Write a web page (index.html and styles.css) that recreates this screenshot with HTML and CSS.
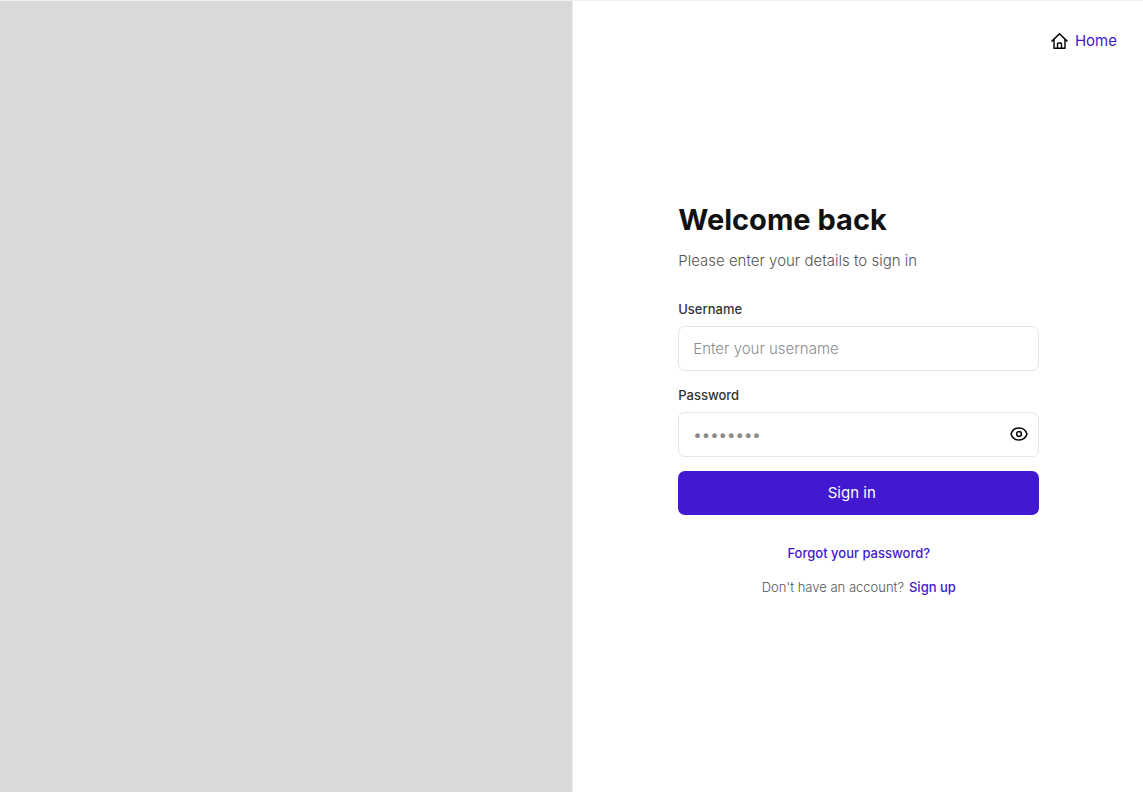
FILE: index.html
```
<!DOCTYPE html>
<html lang="en">
<head>
<meta charset="utf-8">
<meta name="viewport" content="width=device-width, initial-scale=1">
<title>Sign in</title>
<link rel="stylesheet" href="styles.css">
</head>
<body>
<div class="page">
  <div class="cover"></div>
  <div class="panel">
    <nav class="nav">
      <a class="home" href="#">
        <svg class="home-icon" viewBox="0 0 18 18" aria-hidden="true"><path d="M1 8.6 9 .9 17 8.6M3.2 6.8v9.4h11.6V6.8M6.9 16v-4.4q0-1 1-1h2.2q1 0 1 1V16"/></svg>
        <span>Home</span>
      </a>
    </nav>
    <main class="content">
      <h1 class="title">Welcome back</h1>
      <p class="subtitle">Please enter your details to sign in</p>
      <form class="form">
        <div class="field">
          <label class="label" for="username">Username</label>
          <div class="box"><input class="input" id="username" type="text" placeholder="Enter your username"></div>
        </div>
        <div class="field">
          <label class="label" for="password">Password</label>
          <div class="box">
            <input class="input input-password" id="password" type="password" placeholder="••••••••">
            <button class="reveal" type="button" aria-label="Show password">
              <svg class="eye-icon" viewBox="0 0 18 18" aria-hidden="true"><path d="M1 9C2.3 5.2 5.2 3 9 3S15.7 5.2 17 9C15.7 12.8 12.8 15 9 15S2.3 12.8 1 9Z"/><circle cx="9" cy="9" r="2.4"/></svg>
            </button>
          </div>
        </div>
        <button class="submit" type="submit">Sign in</button>
      </form>
      <div class="links">
        <a class="link" href="#">Forgot your password?</a>
        <p class="signup"><span>Don't have an account?</span><a class="link" href="#">Sign up</a></p>
      </div>
    </main>
  </div>
</div>
</body>
</html>
```
FILE: styles.css
```
* {
  box-sizing: border-box;
}

body {
  margin: 0;
  font-family: Inter, "Liberation Sans", sans-serif;
  color: #111;
  background: #fff;
}

.page {
  display: grid;
  grid-template-columns: 1fr 1fr;
  min-height: 100vh;
  border-top: 1px solid #f0f0f0;
}

.cover {
  background: #d9d9d9;
}

.panel {
  display: grid;
  grid-template-rows: 1fr auto 1fr;
  padding-left: 2px;
  border-left: 1px solid #f0f0f0;
}

.nav {
  display: flex;
  justify-content: flex-end;
  align-items: flex-start;
  padding: 30px 26px;
}

.home {
  display: flex;
  align-items: center;
  gap: 7px;
  font-size: 15px;
  line-height: 20px;
  font-weight: 400;
  color: #4318d1;
  text-decoration: none;
}

.home-icon,
.eye-icon {
  display: block;
  width: 18px;
  height: 18px;
  fill: none;
  stroke: #000;
  stroke-width: 1.5;
  stroke-linecap: round;
  stroke-linejoin: round;
}

.home-icon {
  width: 17px;
  height: 17px;
}

.content {
  width: 100%;
  max-width: 361px;
  margin: 0 auto;
  padding-top: 3px;
}

.title {
  margin: 0;
  font-size: 29px;
  line-height: 40px;
  font-weight: 700;
}

.subtitle {
  margin: 11px 0 28px;
  font-size: 15px;
  line-height: 20px;
  font-weight: 300;
  color: #555;
}

.form {
  display: flex;
  flex-direction: column;
  gap: 14px;
}

.field {
  display: flex;
  flex-direction: column;
  gap: 7px;
}

.label {
  font-size: 13px;
  line-height: 20px;
  font-weight: 500;
  color: #333;
}

.box {
  display: flex;
  align-items: center;
  height: 45px;
  padding: 0 10px 0 14px;
  border: 1px solid #e5e5e5;
  border-radius: 7px;
}

.input {
  flex: 1;
  min-width: 0;
  padding: 1px 0 0;
  border: 0;
  outline: 0;
  background: none;
  font: 300 15px/20px Inter, "Liberation Sans", sans-serif;
  color: #111;
}

.input-password {
  font-weight: 400;
}

.input::placeholder {
  color: #8c8c8c;
  opacity: 1;
}

.reveal {
  padding: 0;
  border: 0;
  background: none;
  cursor: pointer;
}

.submit {
  height: 44px;
  padding: 0 14px 0 0;
  border: 0;
  border-radius: 7px;
  background: #4318d1;
  color: #fff;
  font: 400 15px/20px Inter, "Liberation Sans", sans-serif;
  cursor: pointer;
}

.links {
  display: flex;
  flex-direction: column;
  align-items: center;
  gap: 14px;
  margin-top: 28px;
  font-size: 13px;
  line-height: 20px;
}

.link {
  font-weight: 500;
  color: #4318d1;
  text-decoration: none;
}

.signup {
  display: flex;
  gap: 5px;
  margin: 0;
  font-weight: 300;
  color: #555;
}
```
